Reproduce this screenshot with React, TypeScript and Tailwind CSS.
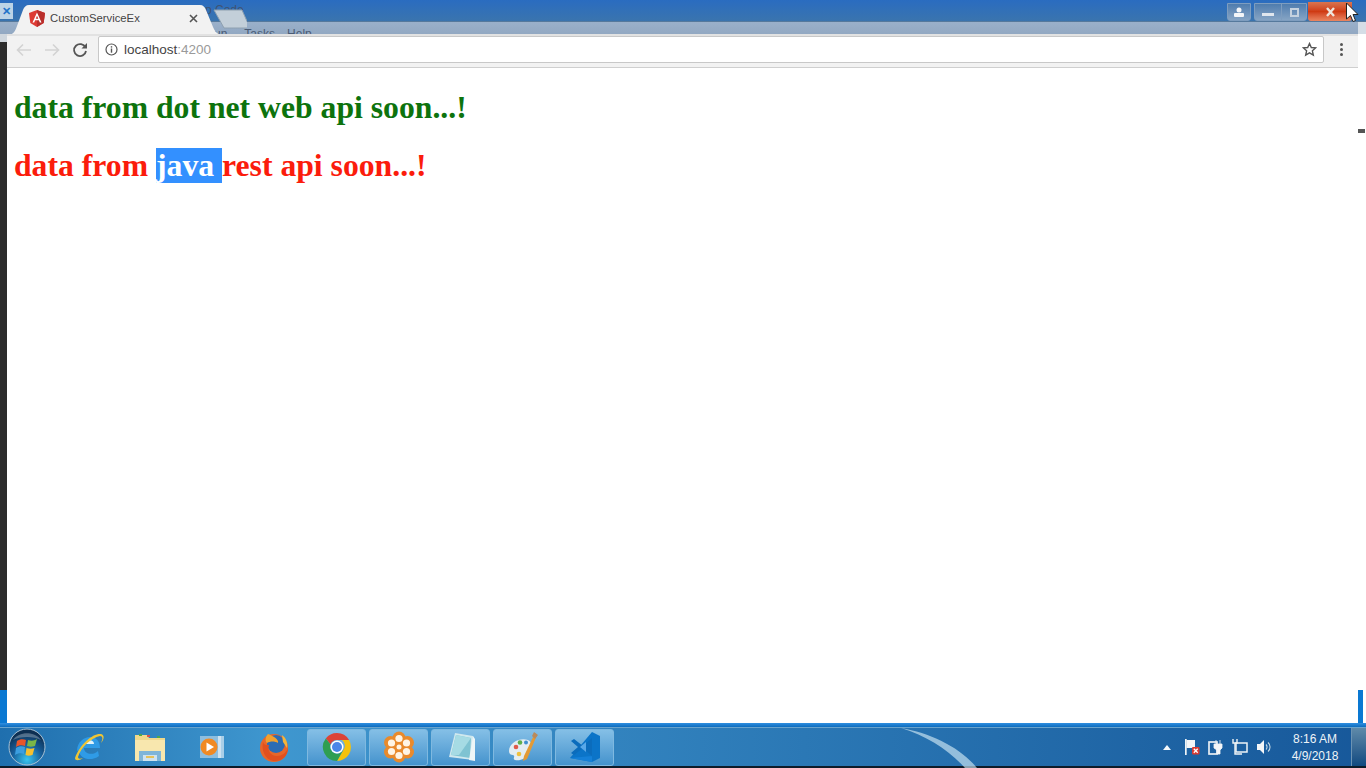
import React from "react";

const Btn = ({ children }: { children: React.ReactNode }) => (
  <div className="w-[59px] h-[37px] rounded-[3px] border border-[#7fb9e0] bg-gradient-to-b from-[#84bfe6] to-[#4493cd] flex items-center justify-center">
    {children}
  </div>
);

const Orb = () => (
  <svg width="38" height="38" viewBox="0 0 38 38">
    <defs>
      <radialGradient id="o" cx="50%" cy="85%" r="75%">
        <stop offset="0" stopColor="#39c5f0" />
        <stop offset="0.55" stopColor="#175f9b" />
        <stop offset="1" stopColor="#0d2f52" />
      </radialGradient>
    </defs>
    <circle cx="19" cy="19" r="18" fill="url(#o)" stroke="#a9c3d6" strokeWidth="1" />
    <path d="M9 13c3-2 6-2 9-1l-1 6c-3-1-6-1-9 1z" fill="#e8552a" />
    <path d="M20 12c3 1 6 1 9-1l-2 7c-3 1-5 1-8 0z" fill="#7ab648" />
    <path d="M8 20c3-2 6-2 9-1l-1 7c-3-1-6-1-9 1z" fill="#3c9ee0" />
    <path d="M18.500 20c3 1 5 1 8 0l-2 7c-3 1-5 1-7 0z" fill="#f6c02e" />
    <path d="M5 12c6-9 22-9 28 0-7-4-21-4-28 0z" fill="#ffffff" opacity="0.28" />
  </svg>
);

const IE = () => (
  <svg width="32" height="32" viewBox="0 0 32 32">
    <path d="M4 20c0-9 7-14 13-14 7 0 10 5 10 11H11c0 6 9 8 14 3l1 5c-8 6-20 3-20-6" fill="#2f9be6" />
    <path d="M12 13h9c0-5-8-5-9 0z" fill="#dff3fc" />
    <path d="M28 3c-8-1-21 10-26 24 0 3 4 3 8 0-3 1-5 1-5-1C8 16 18 7 27 5c3 0 3 3 1 7 3-3 4-8 0-9z" fill="#efc534" />
  </svg>
);

const Folder = () => (
  <svg width="34" height="32" viewBox="0 0 34 32">
    <path d="M2 4h12l2 3h16v23H2z" fill="#f0d88a" />
    <path d="M2 9h30v21H2z" fill="#f8e7ae" />
    <rect x="6" y="3" width="3" height="2" fill="#4da64d" />
    <rect x="14" y="4" width="3" height="2" fill="#d9534a" />
    <rect x="24" y="5" width="3" height="2" fill="#4da64d" />
    <path d="M6 20h22v10H6z" fill="#7fb5d8" />
    <path d="M10 24h14v6H10z" fill="#cfe3ef" />
    <rect x="13" y="25" width="8" height="2" fill="#e6c25a" />
  </svg>
);

const Media = () => (
  <svg width="26" height="26" viewBox="0 0 26 26">
    <rect x="7" y="2" width="18" height="22" fill="#a9cfe8" />
    <rect x="4" y="2" width="18" height="22" fill="#cfe3f1" />
    <rect x="1" y="2" width="18" height="22" fill="#8dbedf" />
    <circle cx="10" cy="13" r="8.500" fill="#f08a24" />
    <path d="M7.500 8.500l7.500 4.500-7.500 4.500z" fill="#ffffff" />
  </svg>
);

const Firefox = () => (
  <svg width="32" height="32" viewBox="0 0 32 32">
    <circle cx="16" cy="17" r="14" fill="#e8662a" />
    <circle cx="18" cy="13" r="9" fill="#2d6cb4" />
    <path d="M5 11c-2 9 3 19 12 19 8 0 13-6 13-13-2 5-6 8-11 8-6 0-10-5-8-11-3 0-5 0-6-3z" fill="#e2501f" />
    <path d="M10 3c-3 3-3 7-1 9 3-2 8-2 11 0 1-4-5-7-10-9z" fill="#f2a12e" />
    <path d="M24 4c4 3 6 8 5 13l-4-6z" fill="#f5b53a" />
  </svg>
);

const Chrome = () => (
  <svg width="30" height="30" viewBox="0 0 30 30">
    <path d="M15 1a14 14 0 0 1 12.100 7H15a7 7 0 0 0-6.500 4.500L3.800 6.500A14 14 0 0 1 15 1z" fill="#dc4437" />
    <path d="M27.100 8A14 14 0 0 1 15 29l6-10.500A7 7 0 0 0 20 8z" fill="#f4c20d" />
    <path d="M3.800 6.500A14 14 0 0 0 15 29l6-10.500a7 7 0 0 1-12.500-6z" fill="#2f9e52" />
    <circle cx="15" cy="15" r="6.500" fill="#ffffff" />
    <circle cx="15" cy="15" r="5" fill="#4a86e8" />
  </svg>
);

const Flower = () => (
  <svg width="30" height="32" viewBox="0 0 30 32">
    <g fill="#e98a2c">
      <circle cx="15" cy="7" r="6.500" />
      <circle cx="23.500" cy="11.500" r="6.500" />
      <circle cx="23.500" cy="21" r="6.500" />
      <circle cx="15" cy="25" r="6.500" />
      <circle cx="6.500" cy="21" r="6.500" />
      <circle cx="6.500" cy="11.500" r="6.500" />
      <circle cx="15" cy="16" r="8" />
    </g>
    <g fill="#fff4e4">
      <circle cx="15" cy="7.500" r="3.600" />
      <circle cx="22.500" cy="12" r="3.600" />
      <circle cx="22.500" cy="20.500" r="3.600" />
      <circle cx="15" cy="24.500" r="3.600" />
      <circle cx="7.500" cy="20.500" r="3.600" />
      <circle cx="7.500" cy="12" r="3.600" />
    </g>
    <circle cx="15" cy="16" r="2.500" fill="#fff4e4" />
  </svg>
);

const Notepad = () => (
  <svg width="32" height="32" viewBox="0 0 32 32">
    <path d="M10 2l18 3v24L4 26z" fill="#cfe8ee" />
    <path d="M11 4l15 3-1 20L6 24z" fill="#7fc3d2" />
    <path d="M11 4l15 3-12 17H6z" fill="#a6dbe4" />
    <path d="M28 5l2 3v22l-6-1z" fill="#eef6f7" />
  </svg>
);

const Paint = () => (
  <svg width="32" height="32" viewBox="0 0 32 32">
    <path d="M2 20C2 11 14 6 21 9c5 2 3 8 1 13-3 6-9 8-14 7-3-1 1-4-2-5-2 0-4-1-4-4z" fill="#e4edf2" />
    <circle cx="9" cy="16" r="2.300" fill="#e05b4a" />
    <circle cx="13" cy="11.500" r="2.300" fill="#5caf4d" />
    <circle cx="19" cy="11.500" r="2" fill="#3f8ed0" />
    <circle cx="12" cy="23" r="2.300" fill="#efc13f" />
    <path d="M28 2l2 2-10 24-4 2 1-5z" fill="#e39a35" />
    <path d="M27 1l4 3-3 4-3-3z" fill="#b98a5c" />
  </svg>
);

const VSCode = () => (
  <svg width="32" height="32" viewBox="0 0 32 32">
    <path d="M23 1l8 4v22l-8 4L1 27z" fill="#0b74c8" />
    <path d="M23 1v30L1 27l22-2V7z" fill="#1480d8" />
    <path d="M2 10l3-2 9 7 9-8v18l-9-8-9 7-3-2 7-6zM17 12l-5 4 5 4z" fill="#0b6cbc" />
    <path d="M17 11v10l-6-5z" fill="#59a8e8" />
  </svg>
);

export default function App() {
  return (
    <div className="w-[1366px] h-[768px] overflow-hidden flex flex-col bg-white font-['Liberation_Sans',sans-serif]">
      {/* window title bar */}
      <div className="relative h-[34px] shrink-0 overflow-hidden bg-[#9ab0ca] flex flex-col">
        <div className="h-[22px] shrink-0 bg-gradient-to-b from-[#2a6cc0] to-[#3a74ae] border-b border-[#56799c]" />
        <div className="flex-1 bg-gradient-to-b from-[#9ab0ca] to-[#92a8c2]" />
        <div className="absolute left-[1358px] top-[22px] w-[8px] h-[12px] bg-[#d5dde6]" />
        <div className="absolute left-[0px] top-[3px] w-[13px] h-[16px] bg-[#bcd3e6] text-[11px] leading-[16px] text-[#2273c9] font-bold text-center">
          ✕
        </div>
        <div className="absolute left-[205px] top-[3px] text-[12px] leading-[14px] text-[#3f5372]">p Code</div>
        <div className="absolute left-[214px] top-[27px] text-[12px] leading-[14px] text-[#4a5b74] whitespace-nowrap">
          <span className="mr-[17px]">un</span>
          <span className="mr-[12px]">Tasks</span>
          <span>Help</span>
        </div>
        <svg className="absolute left-[7px] top-[4px]" width="240" height="31" viewBox="0 0 240 31">
          <path d="M207 6h28l8 18H217z" fill="#c3cfd9" stroke="#8ea0b0" />
          <path d="M0 31c6 0 8-3 10-9l6-16c1-3 3-5 6-5h171c3 0 5 2 6 5l7 17c2 5 5 8 9 8z" fill="#f2f2f2" />
        </svg>
        <svg className="absolute left-[29px] top-[10px]" width="16" height="17" viewBox="0 0 16 17">
          <path d="M8 0l8 3-1.300 10L8 17l-6.700-4L0 3z" fill="#dd3a33" />
          <path d="M8 0l8 3-1.300 10L8 17z" fill="#b92f2c" />
          <path d="M8 2.500L3.500 12.500h1.700l.9-2.300h3.800l.9 2.300h1.700zm1.300 6.300H6.700L8 5.700z" fill="#ffffff" />
        </svg>
        <div className="absolute left-[50px] top-[11px] text-[11.300px] leading-[14px] text-[#444]">CustomServiceEx</div>
        <svg className="absolute left-[189px] top-[14px]" width="9" height="9" viewBox="0 0 9 9">
          <path d="M1 1l7 7M8 1L1 8" stroke="#555" strokeWidth="1.600" />
        </svg>
        <div className="absolute left-[1227px] top-[3px] w-[24px] h-[18px] rounded-b-[3px] border border-[#7e9dbf] bg-gradient-to-b from-[#4f7cae] to-[#86a4c4] flex items-center justify-center">
          <svg width="12" height="10" viewBox="0 0 12 10">
            <circle cx="6" cy="3" r="2.500" fill="#f4f6f8" />
            <rect x="1" y="6" width="10" height="4" rx="1" fill="#f4f6f8" />
          </svg>
        </div>
        <div className="absolute left-[1254px] top-[3px] w-[53px] h-[18px] rounded-b-[3px] border border-[#7e9dbf] bg-gradient-to-b from-[#4f7cae] to-[#86a4c4] flex items-center">
          <div className="w-[27px] h-full border-r border-[#7e9dbf] flex items-center justify-center pt-[5px]">
            <div className="w-[12px] h-[3px] bg-[#dfe6ee]" />
          </div>
          <div className="flex-1 flex items-center justify-center">
            <div className="w-[9px] h-[9px] border-2 border-[#c5d2df]" />
          </div>
        </div>
        <div className="absolute left-[1308px] top-[2px] w-[44px] h-[19px] rounded-b-[3px] bg-gradient-to-b from-[#d9744f] via-[#cf3a12] to-[#ea8560] flex items-center justify-center">
          <svg width="11" height="10" viewBox="0 0 11 10">
            <path d="M2 1l7 8M9 1L2 9" stroke="#efe5dc" strokeWidth="2.400" />
          </svg>
        </div>
        <svg className="absolute left-[1345px] top-[2px]" width="14" height="22" viewBox="0 0 14 22">
          <path d="M1.500 1v16l4-3.500 2.500 6 2.500-1-2.500-6h5z" fill="#ffffff" stroke="#222" strokeWidth="1" />
        </svg>
      </div>

      {/* toolbar row */}
      <div className="h-[34px] shrink-0 flex bg-white">
        <div className="w-[7px] flex flex-col">
          <div className="h-[8px] bg-[#cfd6dd]" />
          <div className="flex-1 bg-[#2c2c2c]" />
        </div>
        <div className="flex-1 flex items-center bg-[#f2f2f2] border-t-2 border-t-[#e2e2e2] border-b border-b-[#cfcfcf] pb-[4px] pl-[9px] pr-[14px]">
          <svg width="16" height="14" viewBox="0 0 16 14">
            <path d="M15 7H2M7 1.500L1.500 7 7 12.500" fill="none" stroke="#d3d3d3" strokeWidth="1.600" />
          </svg>
          <svg className="ml-[12px]" width="16" height="14" viewBox="0 0 16 14">
            <path d="M1 7h13M9 1.500L14.500 7 9 12.500" fill="none" stroke="#d3d3d3" strokeWidth="1.600" />
          </svg>
          <svg className="ml-[12px]" width="16" height="16" viewBox="0 0 16 16">
            <path d="M13.500 5.500A6 6 0 1 0 14 9" fill="none" stroke="#555" strokeWidth="1.800" />
            <path d="M9.500 6.500H15V1z" fill="#555" />
          </svg>
          <div className="ml-[10px] w-[1226px] h-[27px] bg-white rounded-[2px] border border-[#c8c8c8] flex items-center pl-[6px] pr-[6px]">
            <svg width="13" height="13" viewBox="0 0 13 13">
              <circle cx="6.500" cy="6.500" r="5.500" fill="none" stroke="#555" strokeWidth="1.200" />
              <rect x="5.800" y="5.500" width="1.400" height="4.200" fill="#555" />
              <rect x="5.800" y="3.200" width="1.400" height="1.400" fill="#555" />
            </svg>
            <div className="ml-[6px] text-[13.500px] leading-[16px] text-[#444]">
              localhost<span className="text-[#9a9a9a]">:4200</span>
            </div>
            <svg className="ml-auto" width="15" height="15" viewBox="0 0 15 15">
              <path d="M7.500 1.500l1.800 4 4.300.4-3.200 2.900.9 4.300-3.800-2.200-3.800 2.200.9-4.300L1.400 5.900l4.300-.4z" fill="none" stroke="#555" strokeWidth="1.400" />
            </svg>
          </div>
          <div className="ml-[16px] flex flex-col gap-[2px]">
            <div className="w-[3px] h-[3px] rounded-full bg-[#555]" />
            <div className="w-[3px] h-[3px] rounded-full bg-[#555]" />
            <div className="w-[3px] h-[3px] rounded-full bg-[#555]" />
          </div>
        </div>
        <div className="w-[8px] bg-white" />
      </div>

      {/* page */}
      <div className="h-[655px] shrink-0 flex">
        <div className="w-[7px] flex flex-col">
          <div className="flex-1 bg-[#2c2c2c]" />
          <div className="h-[33px] bg-[#0a78d2]" />
        </div>
        <div className="flex-1 pl-[7px] pt-[22px] font-['Liberation_Serif',serif] font-bold text-[31.700px] leading-[36px] whitespace-nowrap">
          <div className="text-[#0d730d]">data from dot net web api soon...!</div>
          <div className="mt-[22px] text-[#fb1c0c]">
            data from <span className="bg-[#3390ff] text-white">java </span>rest api soon...!
          </div>
        </div>
        <div className="w-[8px] flex flex-col">
          <div className="mt-[61px] h-[4px] w-[7px] bg-[#555]" />
          <div className="flex-1" />
          <div className="h-[33px] bg-[#0a78d2] w-[5px]" />
        </div>
      </div>

      {/* accent */}
      <div className="h-[4px] shrink-0 bg-gradient-to-b from-[#2f8fe0] to-[#0a6cbe]" />

      {/* taskbar */}
      <div className="relative flex-1 flex items-center bg-gradient-to-r from-[#1f6fae] via-[#3f97cf] via-20% to-[#17589a] border-t border-[#6aa3cc] border-b-2 border-b-[#0d1c2a]">
        <svg className="absolute left-[895px] top-0" width="100" height="40" viewBox="0 0 100 40">
          <path d="M6 0c30 5 60 20 76 40H70C54 22 32 8 6 0z" fill="#cfe8f5" opacity="0.65" />
        </svg>
        <div className="relative w-[307px] h-full flex items-center shrink-0">
          <div className="ml-[8px] flex items-center"><Orb /></div>
          <div className="ml-[27px] flex items-center"><IE /></div>
          <div className="ml-[28px] flex items-center"><Folder /></div>
          <div className="ml-[32px] flex items-center"><Media /></div>
          <div className="ml-[33px] flex items-center"><Firefox /></div>
        </div>
        <div className="relative flex items-center gap-[3px]">
          <Btn><Chrome /></Btn>
          <Btn><Flower /></Btn>
          <Btn><Notepad /></Btn>
          <Btn><Paint /></Btn>
          <Btn><VSCode /></Btn>
        </div>
        <div className="relative ml-auto flex items-center h-full text-white">
          <svg width="8" height="5" viewBox="0 0 8 5"><path d="M4 0l4 5H0z" fill="#f4f8fb" /></svg>
          <svg className="ml-[13px]" width="16" height="16" viewBox="0 0 16 16">
            <rect x="1" y="0" width="1.700" height="16" fill="#eef3f6" />
            <path d="M2.500 1H11v8H2.500z" fill="#f4f6f8" />
            <rect x="8" y="8" width="7.500" height="7.500" rx="1" fill="#d93a32" />
            <path d="M9.800 9.800l3.900 3.900M13.700 9.800l-3.900 3.900" stroke="#fff" strokeWidth="1.300" />
          </svg>
          <svg className="ml-[8px]" width="16" height="16" viewBox="0 0 16 16">
            <rect x="1" y="3" width="8" height="12" fill="none" stroke="#e8eef2" strokeWidth="1.700" />
            <path d="M8 1v4M12 1v4M6 5h8v4l-2 2v4H9v-4L6 9z" fill="#f4f6f8" stroke="#f4f6f8" strokeWidth="0.800" />
          </svg>
          <svg className="ml-[8px]" width="16" height="16" viewBox="0 0 16 16">
            <rect x="4" y="4" width="11" height="9" fill="none" stroke="#eef3f6" strokeWidth="1.500" />
            <path d="M1 0v4h4V0M3 4v11h7" fill="none" stroke="#eef3f6" strokeWidth="1.400" />
          </svg>
          <svg className="ml-[8px]" width="16" height="16" viewBox="0 0 16 16">
            <path d="M1 5h3l4-4v14l-4-4H1z" fill="#f4f6f8" />
            <path d="M10 5.500a3.500 3.500 0 0 1 0 5M12 3.500a6 6 0 0 1 0 9" fill="none" stroke="#c5d9e6" strokeWidth="1.100" />
          </svg>
          <div className="ml-[17px] w-[52px] pt-[2px] text-center text-[12px] leading-[17px] text-[#eef4f8]">
            <div>8:16 AM</div>
            <div>4/9/2018</div>
          </div>
          <div className="ml-[10px] w-[15px] h-full border-l border-[#6b93b3] bg-gradient-to-b from-[#5f8aa9] to-[#0f4a80]" />
        </div>
      </div>
    </div>
  );
}
